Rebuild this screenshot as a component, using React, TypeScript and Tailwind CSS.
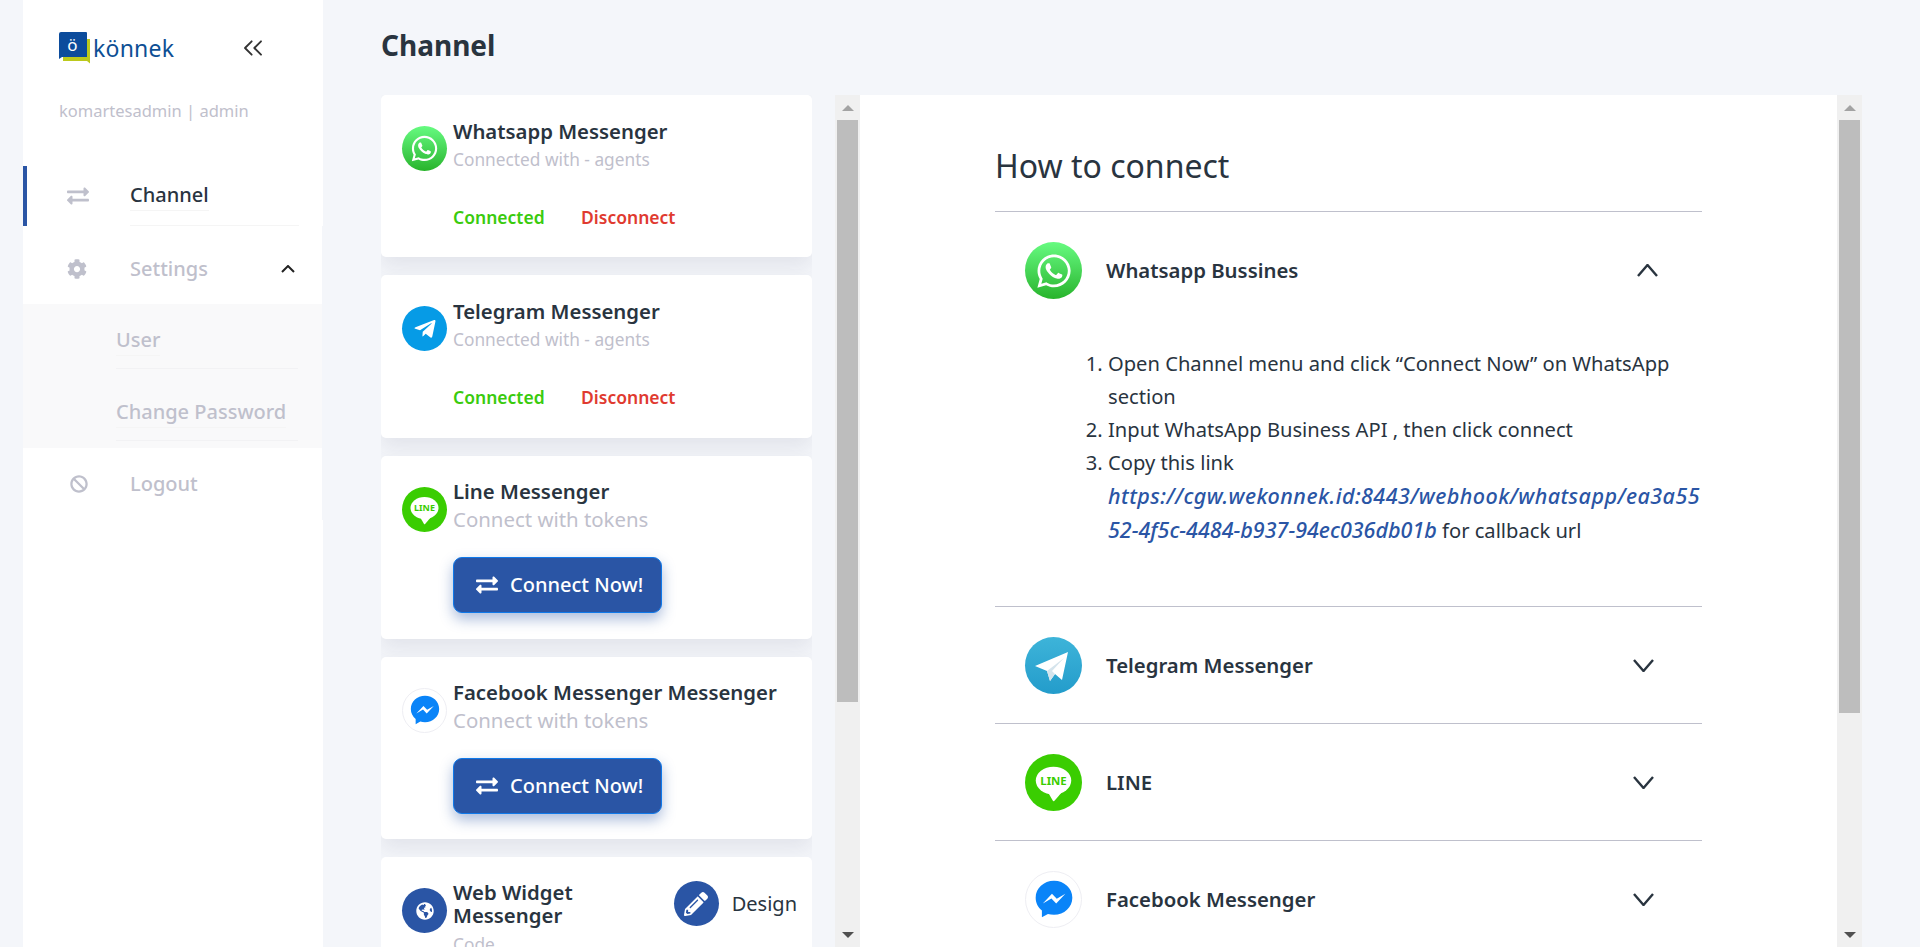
import React from "react";
import { FaWhatsapp, FaTelegramPlane, FaExchangeAlt, FaCog, FaBan, FaPencilAlt, FaGlobeAmericas } from "react-icons/fa";
import { LuChevronsLeft } from "react-icons/lu";

const Messenger = ({ size }: { size: number }) => (
  <svg viewBox="0 0 24 24" width={size} height={size}>
    <path
      fill="#0a84f8"
      d="M12 2C6.400 2 2 6.100 2 11.300c0 2.900 1.300 5.300 3.400 7V22l3.300-1.800c1 .3 2.100.4 3.300.4 5.600 0 10-4.100 10-9.300S17.600 2 12 2z"
    />
    <path fill="#fff" d="M5.900 14.400l5-5.300 2.600 2.700 4.700-2.700-5 5.400-2.600-2.800z" />
  </svg>
);

const LineGlyph = ({ size }: { size: number }) => (
  <svg viewBox="0 0 45 45" width={size} height={size} className="shrink-0">
    <circle cx="22.500" cy="22.500" r="22.500" fill="#3acd01" />
    <ellipse cx="22.500" cy="21" rx="14" ry="11" fill="#fff" />
    <path fill="#fff" d="M18 30l4 7c.3.4.8.4 1.100.1l6-7z" />
    <text x="22.500" y="24.300" textAnchor="middle" fontSize="9" fontWeight="700" fill="#3acd01" fontFamily="Noto Sans, sans-serif">LINE</text>
  </svg>
);

const Chevron = ({ up, w, h, sw, color }: { up?: boolean; w: number; h: number; sw: number; color: string }) => (
  <svg viewBox={`0 0 ${w} ${h}`} width={w} height={h} fill="none" stroke={color} strokeWidth={sw} className="shrink-0">
    <polyline points={up ? `1,${h - 1} ${w / 2},1 ${w - 1},${h - 1}` : `1,1 ${w / 2},${h - 1} ${w - 1},1`} />
  </svg>
);

const WhatsappIcon = ({ className, glyph }: { className: string; glyph: string }) => (
  <div className={`flex shrink-0 items-center justify-center rounded-full bg-gradient-to-b from-[#66fb80] to-[#27b42a] text-white ${className}`}>
    <FaWhatsapp className={glyph} />
  </div>
);

const MessengerIcon = ({ className, size }: { className: string; size: number }) => (
  <div className={`flex shrink-0 items-center justify-center rounded-full border border-[#eeeef3] bg-white ${className}`}>
    <Messenger size={size} />
  </div>
);

const Card = ({ icon, title, sub, children, subBig }: { icon: React.ReactNode; title: string; sub: string; children: React.ReactNode; subBig?: boolean }) => (
  <div className="mb-[18px] rounded-[5px] bg-white pl-[21px] pr-4 pt-[22px] shadow-[0_10px_20px_rgba(60,60,90,0.09)]">
    <div className="flex gap-[6px]">
      <div className="pt-[9px]">{icon}</div>
      <div>
        <div className={`text-[20.350px] font-semibold whitespace-nowrap text-[#29343f] ${subBig ? "leading-[26px]" : "leading-[28px]"}`}>{title}</div>
        <div className={subBig ? "text-[20.400px] leading-[30px] text-[#bfc0cc]" : "text-[17.300px] leading-[30px] text-[#bfc0cc]"}>{sub}</div>
      </div>
    </div>
    <div className="pl-[51px]">{children}</div>
  </div>
);

const Status = ({ h }: { h: string }) => (
  <div className={`flex gap-[36px] pt-[30px] text-[17.500px] leading-[24px] font-semibold ${h}`}>
    <span className="w-[92px] text-[#3acb0d]">Connected</span>
    <span className="text-[#e03a30]">Disconnect</span>
  </div>
);

const ConnectButton = () => (
  <div className="pt-[23px] pb-[25.500px]">
    <button className="flex h-[56px] w-[209px] items-center gap-[12px] rounded-[9px] border border-[#0f79ea] bg-[#2a55a5] pl-[22px] text-[20px] font-medium text-white shadow-[0_6px_14px_rgba(42,85,165,0.4)]">
      <FaExchangeAlt className="h-[22px] w-[22px]" />
      Connect Now!
    </button>
  </div>
);

const ScrollBar = ({ thumb }: { thumb: string }) => (
  <div className="flex w-[25px] shrink-0 flex-col items-center bg-[#f0f0f0]">
    <div className="flex h-[25px] w-full shrink-0 items-center justify-center">
      <div className="h-0 w-0 border-x-[6px] border-b-[6px] border-x-transparent border-b-[#a3a3a3]" />
    </div>
    <div className={`w-[21px] shrink-0 bg-[#bdbdbd] ${thumb}`} />
    <div className="flex-1" />
    <div className="flex h-[25px] w-full shrink-0 items-center justify-center">
      <div className="h-0 w-0 border-x-[6px] border-t-[6px] border-x-transparent border-t-[#505050]" />
    </div>
  </div>
);

const AccRow = ({ icon, title }: { icon: React.ReactNode; title: string }) => (
  <div className="flex h-[117px] items-center border-b border-[#bfc0cc] pl-[30px] pr-[48px]">
    {icon}
    <div className="ml-[24px] flex-1 text-[20.350px] font-semibold text-[#29343f]">{title}</div>
    <Chevron w={21} h={13} sw={2.400} color="#29343f" />
  </div>
);

const NavText = ({ children }: { children: React.ReactNode }) => (
  <span className="border-b border-[#f5f5f5]">{children}</span>
);

export default function App() {
  return (
    <div className="flex h-screen overflow-hidden bg-[#f4f6fa] pl-[23px] font-['Noto_Sans',sans-serif]">
      <aside className="w-[300px] shrink-0 bg-white">
        <div className="flex h-[91px] items-center pl-[36px] pt-[5px]">
          <svg viewBox="0 0 32 32" width="32" height="32" className="shrink-0">
            <path fill="#bcc91c" d="M6 7h25v24.500l-3-2.500H4V10z" />
            <path fill="#0c4c9c" d="M2 0h25a1 1 0 0 1 1 1v24H3l-3 2V2a2 2 0 0 1 2-2z" />
            <text x="13.500" y="19" textAnchor="middle" fontSize="17" fill="#fff" fontFamily="Noto Sans, sans-serif">ö</text>
          </svg>
          <span className="ml-[2px] text-[23px] leading-none tracking-[0.01em] text-[#0d4f94]">könnek</span>
          <LuChevronsLeft className="ml-[63px] h-[32px] w-[32px] stroke-[1.400] text-[#333]" />
        </div>
        <div className="h-[75px] pl-[36px] pt-[8px] text-[16.500px] leading-[24px] text-[#bfc0cc]">komartesadmin | admin</div>
        <div className="flex h-[60px] border-l-4 border-[#2a55a5]">
          <div className="flex w-[103px] items-center pl-[40px]">
            <FaExchangeAlt className="h-[22px] w-[22px] text-[#bfc0cc]" />
          </div>
          <div className="flex w-[169px] items-center border-b border-[#f5f5f5] text-[20px] font-medium text-[#29343f]">
            <NavText>Channel</NavText>
          </div>
        </div>
        <div className="flex h-[78px] items-center border-r border-[#f4f6fa] pl-[44px] pt-[8px] text-[20px] font-medium text-[#bfc0cc]">
          <FaCog className="h-[20px] w-[20px]" />
          <span className="ml-[43px] flex-1">Settings</span>
          <div className="mr-[27px]">
            <Chevron up w={14} h={8} sw={2} color="#222" />
          </div>
        </div>
        <div className="h-[144px] border-r border-[#f4f6fa] bg-[#f9f9fa] pl-[93px] pr-6 text-[20px] font-medium text-[#bfc0cc]">
          <div className="flex h-[65px] items-center border-b border-[#f2f2f4] pt-[8px]">
            <NavText>User</NavText>
          </div>
          <div className="flex h-[72px] items-center border-b border-[#f2f2f4] pt-[16px]">
            <NavText>Change Password</NavText>
          </div>
        </div>
        <div className="flex h-[72px] items-center border-r border-[#f4f6fa] pl-[47px] text-[20px] font-medium text-[#bfc0cc]">
          <FaBan className="h-[18px] w-[18px]" />
          <span className="ml-[42px]">Logout</span>
        </div>
      </aside>

      <main className="flex h-screen min-w-0 flex-1 flex-col pl-[58px]">
        <h1 className="h-[95px] shrink-0 pt-[24px] text-[28px] leading-[42px] font-bold text-[#29343f]">Channel</h1>
        <div className="flex min-h-0 flex-1">
          <div className="w-[431px] shrink-0 overflow-hidden">
            <div className="w-[431px]">
              <Card
                title="Whatsapp Messenger"
                sub="Connected with - agents"
                icon={<WhatsappIcon className="h-[45px] w-[45px]" glyph="h-[29px] w-[29px]" />}
              >
                <Status h="h-[82px]" />
              </Card>
              <Card
                title="Telegram Messenger"
                sub="Connected with - agents"
                icon={
                  <div className="flex h-[45px] w-[45px] shrink-0 items-center justify-center rounded-full bg-[#069be6] text-white">
                    <FaTelegramPlane className="h-[24px] w-[24px]" />
                  </div>
                }
              >
                <Status h="h-[83px]" />
              </Card>
              <Card title="Line Messenger" sub="Connect with tokens" subBig icon={<LineGlyph size={45} />}>
                <ConnectButton />
              </Card>
              <Card
                title="Facebook Messenger Messenger"
                sub="Connect with tokens"
                subBig
                icon={<MessengerIcon className="h-[45px] w-[45px]" size={34} />}
              >
                <ConnectButton />
              </Card>
              <div className="flex rounded-[5px] bg-white pl-[21px] pr-[15px] pt-[24px] pb-[20px]">
                <div className="flex h-[45px] w-[45px] shrink-0 translate-y-[7px] items-center justify-center rounded-full bg-[#2a55a5] text-white">
                  <FaGlobeAmericas className="h-[18px] w-[18px]" />
                </div>
                <div className="ml-[6px] w-[180px]">
                  <div className="text-[20.350px] leading-[23px] font-semibold text-[#29343f]">Web Widget Messenger</div>
                  <div className="mt-[3px] text-[17.300px] leading-[30px] text-[#bfc0cc]">Code</div>
                </div>
                <div className="ml-auto flex h-[45px] items-center">
                  <div className="flex h-[45px] w-[45px] items-center justify-center rounded-full bg-[#2a55a5] text-white">
                    <FaPencilAlt className="h-[24px] w-[24px]" />
                  </div>
                  <span className="ml-[13px] text-[20px] text-[#29343f]">Design</span>
                </div>
              </div>
            </div>
          </div>
          <div className="ml-[23px] flex">
            <ScrollBar thumb="h-[582px]" />
          </div>
          <div className="min-w-0 flex-1 overflow-hidden bg-white pl-[135px] pr-[135px]">
            <div className="flex h-[117px] items-center border-b border-[#bfc0cc] pt-[25px] text-[32px] text-[#29343f]">How to connect</div>
            <div className="h-[395px] border-b border-[#bfc0cc]">
              <div className="flex h-[117px] items-center pl-[30px] pr-[44px]">
                <WhatsappIcon className="h-[57px] w-[57px]" glyph="h-[38px] w-[38px]" />
                <div className="ml-[24px] flex-1 text-[20.350px] font-semibold text-[#29343f]">Whatsapp Bussines</div>
                <Chevron up w={21} h={13} sw={2.400} color="#29343f" />
              </div>
              <ol className="ml-[113px] mt-[18px] list-decimal text-[20.150px] leading-[33px] text-[#29343f]">
                <li>Open Channel menu and click “Connect Now” on WhatsApp section</li>
                <li>Input WhatsApp Business API , then click connect</li>
                <li className="break-all">
                  <span className="break-normal">Copy this link </span>
                  <br />
                  <em className="text-[21.500px] font-medium tracking-[0.45px] text-[#2a55a5]">
                    https://cgw.wekonnek.id:8443/webhook/whatsapp/ea3a55
                    <span className="tracking-normal">52-4f5c-4484-b937-94ec036db01b</span>
                  </em>{" "}
                  <span className="break-normal">for callback url</span>
                </li>
              </ol>
            </div>
            <AccRow
              title="Telegram Messenger"
              icon={
                <div className="shrink-0 overflow-hidden rounded-full bg-gradient-to-b from-[#3db4d9] to-[#239ccb]">
                  <svg viewBox="0 0 57 57" width="57" height="57">
                    <path fill="#fff" d="M43 15L10 29l12 5 3 10 5-7 7 6z" />
                    <path fill="#d5e4ec" d="M22 34l3 10 5-7-3-3 12-13z" />
                  </svg>
                </div>
              }
            />
            <AccRow title="LINE" icon={<LineGlyph size={57} />} />
            <AccRow title="Facebook Messenger" icon={<MessengerIcon className="h-[57px] w-[57px]" size={44} />} />
          </div>
          <ScrollBar thumb="h-[593px]" />
          <div className="w-[58px] shrink-0" />
        </div>
      </main>
    </div>
  );
}
